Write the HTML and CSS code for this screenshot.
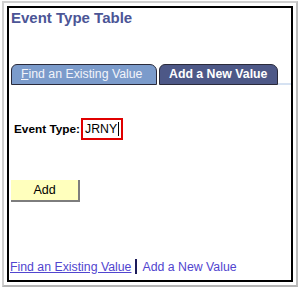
FILE: index.html
```html
<!DOCTYPE html>
<html lang="en">

<head>
  <meta charset="UTF-8">
  <title>Event Type Table</title>
  <link rel="stylesheet" href="styles.css">
</head>

<body>
  <div id="frame">
    <div id="panel">
      <div class="pagetitle">Event Type Table</div>
      <div class="tabs">
        <div class="tab off"><span class="key">F</span>ind an Existing Value</div>
        <div class="tab on">Add a New Value</div>
        <div class="tabline"></div>
      </div>
      <div class="field">
        <label for="evtype">Event Type:</label>
        <div class="inputbox" id="evtype">JRNY<span class="caret"></span></div>
      </div>
      <div class="addrow">
        <div class="addbtn">Add</div>
      </div>
      <div class="footer">
        <a href="#" class="link under">Find an Existing Value</a>
        <span class="sep"></span>
        <a href="#" class="link">Add a New Value</a>
      </div>
    </div>
  </div>
</body>

</html>
```

FILE: styles.css
```css
body {
  margin: 0;
  font-family: "Liberation Sans", Arial, sans-serif;
  font-size: 12.3px;
}

#frame {
  margin: 1px 1px 2px 2px;
  border: 2px solid #cfcfcf;
  border-right-color: #bdbdbd;
  border-bottom-color: #b5b5b5;
  padding: 3px;
  background: #fff;
}

#panel {
  border: 2px solid #000;
  height: 272px;
  display: flex;
  flex-direction: column;
}

.pagetitle {
  color: #4b5596;
  font-weight: bold;
  font-size: 15px;
  line-height: 18px;
  padding: 1px 0 0 2px;
}

.tabs {
  display: flex;
  align-items: flex-end;
  margin: 37px 0 0 2px;
  height: 21px;
  white-space: nowrap;
}

.tab {
  height: 19px;
  line-height: 19px;
  border: 1px solid #2a2a3a;
  border-radius: 6px 7px 0 0;
  padding: 0 0 0 9px;
  box-sizing: content-box;
}

.tab.off {
  width: 135px;
  background: #7b9bcb;
  color: #f2f4fa;
}

.tab.on {
  width: 108px;
  margin-left: 2px;
  background: #4d5887;
  color: #fff;
  font-weight: bold;
}

.key {
  text-decoration: underline;
}

.tabline {
  flex: 1;
  height: 0;
  border-bottom: 2px solid #d6e2f2;
}

.field {
  display: flex;
  align-items: center;
  margin: 33px 0 0 5px;
  white-space: nowrap;
}

.field label {
  font-weight: bold;
  font-size: 11.8px;
  color: #000;
  flex: none;
  margin-right: 1px;
}

.inputbox {
  flex: none;
  width: 36px;
  height: 18px;
  line-height: 18px;
  border: 2px solid #e00000;
  padding-left: 2px;
  color: #000;
}

.caret {
  display: inline-block;
  width: 1px;
  height: 14px;
  background: #000;
  vertical-align: -3px;
  margin-left: 1px;
}

.addrow {
  margin: 40px 0 0 2px;
}

.addbtn {
  width: 67px;
  height: 20px;
  line-height: 20px;
  text-align: center;
  background: #ffffbd;
  border-right: 2px solid #7d7d7d;
  border-bottom: 2px solid #7d7d7d;
  color: #000;
  font-size: 12.5px;
}

.footer {
  margin-top: auto;
  padding: 0 0 6px 1px;
  display: flex;
  align-items: center;
}

.link {
  color: #5145cf;
  text-decoration: none;
}

.link.under {
  text-decoration: underline;
}

.sep {
  width: 2px;
  height: 15px;
  background: #1c1c5a;
  margin: 0 5px 0 4px;
}
```
